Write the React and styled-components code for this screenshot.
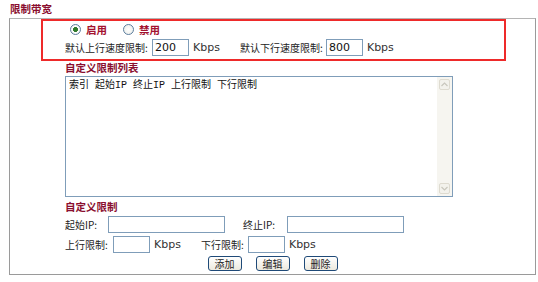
import React from "react";
import styled, { createGlobalStyle } from "styled-components";

const GlobalStyle = createGlobalStyle`
  html, body {
    margin: 0;
    padding: 0;
    background: #fff;
  }
  body {
    font-family: "DejaVu Sans", "Noto Sans CJK SC", sans-serif;
    font-size: 10px;
    color: #222;
  }
`;

const CJK = `"Noto Sans CJK SC", "DejaVu Sans", sans-serif`;

const Page = styled.div`
  width: 538px;
  height: 282px;
  padding-top: 2px;
  box-sizing: border-box;
`;

const Title = styled.div`
  margin-left: 10px;
  height: 16px;
  line-height: 14px;
  font-family: ${CJK};
  font-size: 10.5px;
  font-weight: bold;
  color: #8a0f30;
`;

const Box = styled.div`
  margin-left: 9px;
  width: 527px;
  box-sizing: border-box;
  border: 1px solid #9a9a9a;
  border-top-color: #b4b4b4;
  display: flex;
  flex-direction: column;
  padding-bottom: 3px;
`;

const RedFrame = styled.div`
  margin-left: 31px;
  width: 465px;
  height: 42px;
  box-sizing: border-box;
  border: 2px solid #ee2a2a;
  padding-top: 2px;
  display: flex;
  flex-direction: column;
  gap: 3px;
`;

const RadioRow = styled.div`
  display: flex;
  align-items: center;
  height: 13px;
  padding-left: 27px;
`;

const Radio = styled.input.attrs({ type: "radio" })`
  appearance: none;
  margin: 0 5px 0 0;
  width: 11px;
  height: 11px;
  border-radius: 50%;
  border: 1px solid #5b7d9e;
  box-sizing: border-box;
  background: radial-gradient(circle, #fff 0%, #e9ebe6 100%);
  &:checked {
    background: radial-gradient(circle, #2f7a2a 0 2.2px, #fff 2.8px, #e6e8e3 100%);
  }
`;

const RadioText = styled.label`
  font-family: ${CJK};
  font-size: 10.5px;
  font-weight: bold;
  color: #a3122f;
  line-height: 13px;
  margin-right: ${(p) => p.$gap || 0}px;
`;

const Row = styled.div`
  display: flex;
  align-items: center;
  height: 17px;
  padding-left: ${(p) => p.$pl || 0}px;
  margin-top: ${(p) => p.$mt || 0}px;
`;

const Label = styled.span`
  display: inline-block;
  width: ${(p) => p.$w}px;
  margin-left: ${(p) => p.$ml || 0}px;
  font-family: ${CJK};
  font-size: 10px;
  color: #222;
  white-space: nowrap;
`;

const TextInput = styled.input`
  width: ${(p) => p.$w}px;
  height: 17px;
  box-sizing: border-box;
  margin: 0;
  padding: 0 2px;
  border: 1px solid #7f9db9;
  background: #fff;
  font-family: "DejaVu Sans", sans-serif;
  font-size: 11px;
  color: #111;
  outline: none;
`;

const Unit = styled.span`
  margin-left: 4px;
  font-family: "DejaVu Sans", sans-serif;
  font-size: 11px;
  color: #333;
`;

const Section = styled.div`
  padding-left: 55px;
  display: flex;
  flex-direction: column;
`;

const SectionTitle = styled.div`
  height: ${(p) => p.$h}px;
  line-height: ${(p) => p.$lh}px;
  font-family: ${CJK};
  font-size: 10.5px;
  font-weight: bold;
  color: #8a0f30;
`;

const ListBox = styled.div`
  width: 388px;
  height: 121px;
  box-sizing: border-box;
  border: 1px solid #7f9db9;
  display: flex;
`;

const ListContent = styled.div`
  flex: 1;
  padding: 3px 3px;
  font-family: "Liberation Mono", "Noto Sans CJK SC", monospace;
  font-size: 10px;
  line-height: 12px;
  color: #111;
  white-space: pre;
`;

const ScrollBar = styled.div`
  width: 15px;
  background: #f6f5f0;
  display: flex;
  flex-direction: column;
  justify-content: space-between;
  align-items: center;
  padding: 2px 0;
`;

const ScrollButton = styled.div`
  width: 11px;
  height: 11px;
  box-sizing: border-box;
  border: 1px solid #dedbd0;
  border-radius: 2px;
  background: #f3f2ec;
  display: flex;
  align-items: center;
  justify-content: center;
`;

const ButtonRow = styled.div`
  display: flex;
  justify-content: center;
  gap: 14px;
  margin-top: 3px;
  padding-right: 55px;
`;

const Button = styled.button`
  width: 34px;
  height: 15px;
  margin: 0;
  padding: 0;
  box-sizing: border-box;
  border: 1px solid #1f4a78;
  border-radius: 3px;
  background: linear-gradient(#ffffff, #ece9de);
  font-family: ${CJK};
  font-size: 10px;
  line-height: 13px;
  color: #222;
`;

const Chevron = ({ up }) => (
  <svg width="7" height="5" viewBox="0 0 7 5">
    <path
      d={up ? "M0.5 4 L3.5 1 L6.5 4" : "M0.5 1 L3.5 4 L6.5 1"}
      fill="none"
      stroke="#c9c7bd"
      strokeWidth="1.2"
    />
  </svg>
);

export default function App() {
  return (
    <Page>
      <GlobalStyle />
      <Title>限制带宽</Title>
      <Box>
        <RedFrame>
          <RadioRow>
            <Radio name="mode" id="on" defaultChecked />
            <RadioText htmlFor="on" $gap={16}>启用</RadioText>
            <Radio name="mode" id="off" />
            <RadioText htmlFor="off">禁用</RadioText>
          </RadioRow>
          <Row $pl={22}>
            <Label $w={87}>默认上行速度限制:</Label>
            <TextInput $w={37} defaultValue="200" />
            <Unit>Kbps</Unit>
            <Label $w={86} $ml={20}>默认下行速度限制:</Label>
            <TextInput $w={37} defaultValue="800" />
            <Unit>Kbps</Unit>
          </Row>
        </RedFrame>
        <Section>
          <SectionTitle $h={15} $lh={13}>自定义限制列表</SectionTitle>
          <ListBox>
            <ListContent>索引 起始IP 终止IP 上行限制 下行限制</ListContent>
            <ScrollBar>
              <ScrollButton>
                <Chevron up />
              </ScrollButton>
              <ScrollButton>
                <Chevron />
              </ScrollButton>
            </ScrollBar>
          </ListBox>
          <SectionTitle $h={19} $lh={19}>自定义限制</SectionTitle>
          <Row>
            <Label $w={43}>起始IP:</Label>
            <TextInput $w={117} />
            <Label $w={44} $ml={18}>终止IP:</Label>
            <TextInput $w={117} />
          </Row>
          <Row $mt={3}>
            <Label $w={48}>上行限制:</Label>
            <TextInput $w={37} />
            <Unit>Kbps</Unit>
            <Label $w={47} $ml={20}>下行限制:</Label>
            <TextInput $w={37} />
            <Unit>Kbps</Unit>
          </Row>
          <ButtonRow>
            <Button>添加</Button>
            <Button>编辑</Button>
            <Button>删除</Button>
          </ButtonRow>
        </Section>
      </Box>
    </Page>
  );
}
